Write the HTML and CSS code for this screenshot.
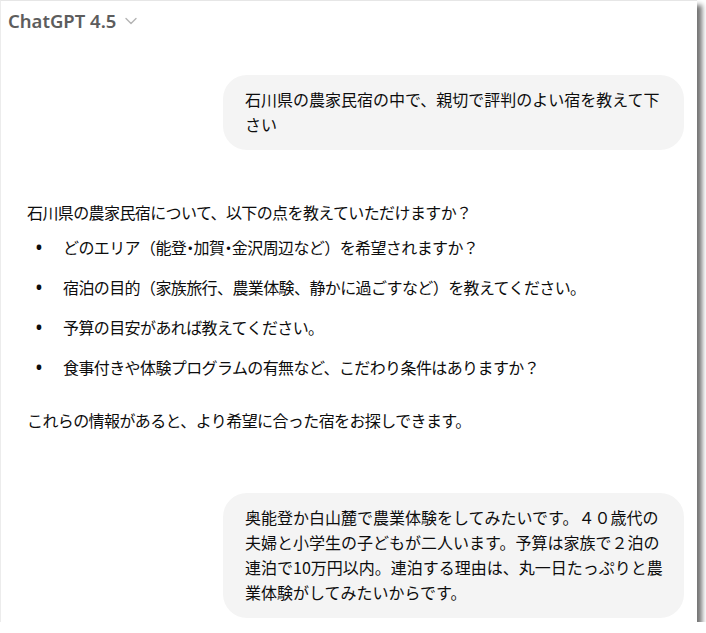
FILE: index.html
```html
<!DOCTYPE html>
<html lang="ja">
<head>
<meta charset="utf-8">
<link rel="stylesheet" href="styles.css">
</head>
<body>
<div class="frame">
  <header class="header">
    <span class="model">ChatGPT 4.5</span>
    <svg class="chev" width="12" height="8" viewBox="0 0 12 8"><path d="M1 1.5 L6 6.5 L11 1.5" fill="none" stroke="#b4b4b4" stroke-width="1.4" stroke-linecap="round" stroke-linejoin="round"/></svg>
  </header>
  <div class="user-row first">
    <div class="bubble">石川県の農家民宿の中で、親切で評判のよい宿を教えて下さい</div>
  </div>
  <div class="assistant">
    <p class="lead">石川県の農家民宿について、以下の点を教えていただけますか？</p>
    <ul class="list">
      <li>どのエリア（能登<span class="dot">・</span>加賀<span class="dot">・</span>金沢周辺など）を希望されますか？</li>
      <li>宿泊の目的（家族旅行、農業体験、静かに過ごすなど）を教えてください。</li>
      <li>予算の目安があれば教えてください。</li>
      <li>食事付きや体験プログラムの有無など、こだわり条件はありますか？</li>
    </ul>
    <p class="tail">これらの情報があると、より希望に合った宿をお探しできます。</p>
  </div>
  <div class="user-row second">
    <div class="bubble">奥能登か白山麓で農業体験をしてみたいです。４０歳代の夫婦と小学生の子どもが二人います。予算は家族で２泊の連泊で10万円以内。連泊する理由は、丸一日たっぷりと農業体験がしてみたいからです。</div>
  </div>
</div>
</body>
</html>
```
FILE: styles.css
```css
html, body {
  margin: 0;
  padding: 0;
  background: #ffffff;
}
body {
  font-family: "Noto Sans CJK JP", "Noto Sans", sans-serif;
  color: #0d0d0d;
  font-size: 16px;
  line-height: 25px;
}
.frame {
  width: 696px;
  height: 621px;
  border-top: 1px solid #e6e6e6;
  border-left: 1px solid #ececec;
  background: #ffffff;
  box-shadow: 5px 5px 5px rgba(0, 0, 0, 0.55);
  overflow: hidden;
}
.header {
  height: 38px;
  display: flex;
  align-items: center;
  padding-left: 7px;
  gap: 9px;
}
.model {
  font-family: "Noto Sans", sans-serif;
  font-weight: 600;
  font-size: 18.5px;
  color: #5d5d5d;
}
.chev {
  margin-top: 2px;
}
.user-row {
  display: flex;
  justify-content: flex-end;
  padding-right: 13px;
}
.user-row.first {
  margin-top: 36px;
}
.user-row.second {
  margin-top: 60px;
}
.bubble {
  width: 422px;
  background: #f4f4f4;
  border-radius: 24px;
  padding: 12px 17px 13px 22px;
}
.assistant {
  padding-left: 26px;
  margin-top: 50px;
  letter-spacing: -0.6px;
}
.assistant p {
  margin: 0;
}
.dot {
  font-feature-settings: "palt";
}
.list {
  list-style: none;
  margin: 10px 0 0 0;
  padding-left: 8px;
  display: flex;
  flex-direction: column;
  gap: 15px;
}
.list li {
  display: flex;
}
.list li::before {
  content: "•";
  flex: 0 0 28px;
  font-family: "Noto Sans", sans-serif;
  font-size: 21px;
  line-height: 25px;
  letter-spacing: 0;
}
.tail {
  margin-top: 28px !important;
}
```
